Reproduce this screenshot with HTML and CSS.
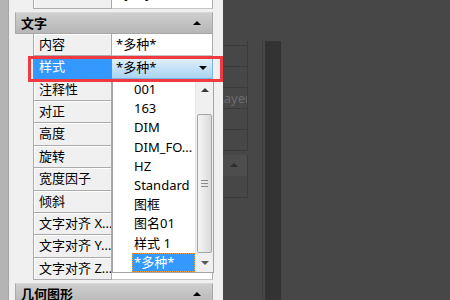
FILE: index.html
```html
<!DOCTYPE html>
<html>
<head>
	<title>特性 – 文字</title>
	<meta charset="UTF-8">
	<link rel="stylesheet" href="styles.css">
</head>
<body>
	<div class="screen">
		<div class="edge"></div>

		<div class="panel">
			<div class="props top-props">
				<div class="label">颜色</div><div class="value">ByLayer</div>
			</div>

			<div class="section">文字<span class="caret"></span></div>

			<div class="props">
				<div class="label">内容</div><div class="value">*多种*</div>
				<div class="label picked">样式</div><div class="value combo">*多种*<span class="combo-arrow"></span></div>
				<div class="label">注释性</div><div class="value"></div>
				<div class="label">对正</div><div class="value"></div>
				<div class="label">高度</div><div class="value"></div>
				<div class="label">旋转</div><div class="value"></div>
				<div class="label">宽度因子</div><div class="value"></div>
				<div class="label">倾斜</div><div class="value"></div>
				<div class="label">文字对齐 X...</div><div class="value"></div>
				<div class="label">文字对齐 Y...</div><div class="value"></div>
				<div class="label">文字对齐 Z...</div><div class="value"></div>

				<div class="droplist">
					<ul class="items">
						<li>001</li>
						<li>163</li>
						<li>DIM</li>
						<li>DIM_FO...</li>
						<li>HZ</li>
						<li>Standard</li>
						<li>图框</li>
						<li>图名01</li>
						<li>样式 1</li>
						<li class="current">*多种*</li>
					</ul>
					<div class="scroll">
						<div class="scroll-btn"><span class="arrow-up"></span></div>
						<div class="thumb"><span class="grip"></span></div>
						<div class="scroll-btn"><span class="arrow-down"></span></div>
					</div>
				</div>
			</div>

			<div class="section">几何图形<span class="caret"></span></div>
		</div>

		<div class="shade">
			<div class="ghost">
				<div class="ghost-cell first"></div>
				<div class="ghost-cell"></div>
				<div class="ghost-cell"></div>
				<div class="ghost-cell"><span class="ghost-text">Layer</span></div>
				<div class="ghost-cell"></div>
				<div class="ghost-cell"></div>
				<div class="ghost-head"><span class="ghost-caret"></span></div>
				<div class="ghost-row"></div>
			</div>
			<div class="ghost-line"></div>
			<div class="ghost-bar"></div>
		</div>

		<div class="callout"></div>
	</div>
</body>
</html>
```

FILE: styles.css
```css
body {
	margin: 0px;
	font-family: "Noto Sans", "Noto Sans CJK SC", sans-serif;
	font-size: 13px;
	color: #000000;
	background-color: #474747;
}

.screen {
	position: relative;
	display: flex;
	width: 450px;
	height: 300px;
	overflow: hidden;
}

.edge {
	width: 8px;
	background-color: #b4b4b4;
	border-right: 1px solid #a6a6a6;
}

.panel {
	box-sizing: border-box;
	width: 214px;
	padding: 0px 10px 0px 6px;
	background-color: #f0f0f0;
}

/* property grid */

.props {
	position: relative;
	display: grid;
	grid-template-columns: 79px 101px;
	grid-auto-rows: 22.36px;
	margin-left: 18px;
}

.top-props {
	margin-top: -13px;
	grid-auto-rows: 22px;
}

.top-props .label,
.top-props .value {
	line-height: 12px;
}

.label {
	box-sizing: border-box;
	padding-left: 5px;
	line-height: 20px;
	white-space: nowrap;
	overflow: hidden;
	border: 1px solid #ababab;
	border-top: 0;
	box-shadow: inset 1px 1px 0px #ffffff;
}

.value {
	box-sizing: border-box;
	padding-left: 4px;
	line-height: 20px;
	background-color: #ffffff;
	border-bottom: 1px solid #c4c4c4;
	border-right: 1px solid #ababab;
}

.label.picked {
	background-color: #3399ff;
	color: #ffffff;
	box-shadow: none;
	border-color: #3399ff;
}

.value.combo {
	position: relative;
	background: linear-gradient(#e4f1fc, #a9d4f2);
	border: 1px solid #7fb6e8;
	border-left: 0;
}

.combo-arrow {
	position: absolute;
	right: 5px;
	top: 9px;
	border-left: 4px solid transparent;
	border-right: 4px solid transparent;
	border-top: 4px solid #000000;
}

.section {
	position: relative;
	box-sizing: border-box;
	height: 22px;
	margin-top: 2px;
	padding-left: 5px;
	line-height: 21px;
	font-weight: bold;
	background: linear-gradient(#cfcfcf, #b6b6b6);
	border: 1px solid #a9a9a9;
	border-top-color: #d8d8d8;
}

.props + .section {
	margin-top: 3px;
}

.caret {
	position: absolute;
	right: 11px;
	top: 8px;
	border-left: 4px solid transparent;
	border-right: 4px solid transparent;
	border-bottom: 4px solid #000000;
}

/* dropdown list */

.droplist {
	position: absolute;
	left: 79px;
	top: 45px;
	box-sizing: border-box;
	width: 102px;
	height: 194px;
	display: flex;
	background-color: #ffffff;
	border: 1px solid #a3a3a3;
}

.items {
	flex: 1;
	list-style: none;
	margin: 0px;
	padding: 0px;
}

.items li {
	height: 19.2px;
	line-height: 19px;
	margin-left: 19px;
	padding-left: 2px;
	white-space: nowrap;
}

.items li.current {
	box-sizing: border-box;
	background-color: #3399ff;
	color: #ffffff;
	outline: 1px dotted #f0a040;
	outline-offset: -1px;
}

.scroll {
	width: 17px;
	display: flex;
	flex-direction: column;
	background-color: #f0f0f0;
	border-left: 1px solid #e6e6e6;
}

.scroll-btn {
	height: 19px;
	display: flex;
	align-items: center;
	justify-content: center;
}

.arrow-up {
	border-left: 4px solid transparent;
	border-right: 4px solid transparent;
	border-bottom: 4px solid #3a3a3a;
}

.arrow-down {
	border-left: 4px solid transparent;
	border-right: 4px solid transparent;
	border-top: 4px solid #5a5a5a;
}

.thumb {
	flex: 1;
	margin: 15px 1px 0px 1px;
	display: flex;
	align-items: center;
	justify-content: center;
	background: linear-gradient(to right, #f6f6f6, #dadada);
	border: 1px solid #a5a5a5;
	border-radius: 2px;
}

.grip {
	width: 7px;
	height: 5px;
	border-top: 1px solid #8a8a8a;
	border-bottom: 1px solid #8a8a8a;
	background: linear-gradient(transparent 2px, #8a8a8a 2px, #8a8a8a 3px, transparent 3px);
}

/* dimmed area on the right */

.shade {
	flex: 1;
	display: flex;
	background-color: #474747;
}

.ghost {
	width: 25px;
	margin-top: 41px;
}

.ghost-cell {
	box-sizing: border-box;
	height: 21px;
	overflow: hidden;
	white-space: nowrap;
	border-bottom: 1px solid #3b3b3b;
	border-right: 1px solid #3b3b3b;
}

.ghost-cell.first {
	height: 5px;
}

.ghost-text {
	display: inline-block;
	margin-left: -6px;
	line-height: 20px;
	color: #6c6c6c;
}

.ghost-head {
	position: relative;
	box-sizing: border-box;
	height: 21px;
	margin-top: 4px;
	background-color: #4d4d4d;
	border-right: 1px solid #3b3b3b;
}

.ghost-caret {
	position: absolute;
	left: 7px;
	top: 8px;
	border-left: 4px solid transparent;
	border-right: 4px solid transparent;
	border-bottom: 4px solid #2e2e2e;
}

.ghost-row {
	box-sizing: border-box;
	height: 22px;
	border-bottom: 1px solid #3b3b3b;
	border-right: 1px solid #3b3b3b;
}

.ghost-line {
	width: 1px;
	margin: 41px 0px 0px 14px;
	background-color: #3c3c3c;
}

.ghost-bar {
	width: 16px;
	margin: 41px 0px 0px 2px;
	background-color: #333333;
}

/* red highlight around the style row */

.callout {
	position: absolute;
	left: 28px;
	top: 56px;
	width: 189px;
	height: 20px;
	border: 3px solid #ee3a40;
}
```
